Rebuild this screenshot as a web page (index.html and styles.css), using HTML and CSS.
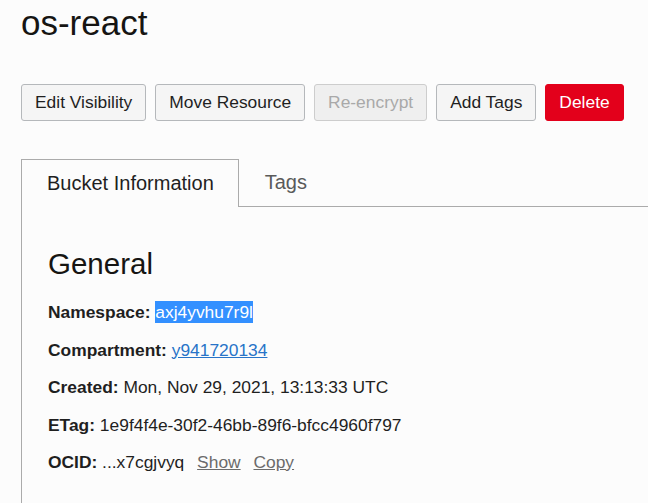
FILE: index.html
```html
<!DOCTYPE html>
<html lang="en">
<head>
<meta charset="utf-8">
<title>os-react</title>
<link rel="stylesheet" href="styles.css">
</head>
<body>
<div class="page">
  <h1 class="title">os-react</h1>
  <div class="actions">
    <button class="btn">Edit Visibility</button>
    <button class="btn">Move Resource</button>
    <button class="btn btn-disabled" disabled>Re-encrypt</button>
    <button class="btn">Add Tags</button>
    <button class="btn btn-danger">Delete</button>
  </div>
  <div class="tabs">
    <div class="tab tab-active">Bucket Information</div>
    <div class="tab">Tags</div>
    <div class="tab-fill"></div>
  </div>
  <div class="panel">
    <h2 class="section-title">General</h2>
    <div class="row"><span class="label">Namespace:</span> <span class="selected">axj4yvhu7r9l</span></div>
    <div class="row"><span class="label">Compartment:</span> <a class="link" href="#">y941720134</a></div>
    <div class="row"><span class="label">Created:</span> Mon, Nov 29, 2021, 13:13:33 UTC</div>
    <div class="row"><span class="label">ETag:</span> 1e9f4f4e-30f2-46bb-89f6-bfcc4960f797</div>
    <div class="row"><span class="label">OCID:</span> ...x7cgjvyq <a class="sublink" href="#">Show</a> <a class="sublink" href="#">Copy</a></div>
  </div>
</div>
</body>
</html>
```
FILE: styles.css
```css
html, body {
  margin: 0;
  padding: 0;
  background: #fcfcfc;
}
body {
  font-family: "Liberation Sans", Arial, sans-serif;
  color: #1f1f1f;
  overflow: hidden;
}
.page {
  padding-left: 21px;
  padding-top: 3px;
}
.title {
  margin: 0;
  font-size: 35px;
  font-weight: normal;
  line-height: 40px;
  color: #161513;
}
.actions {
  display: flex;
  gap: 9px;
  margin-top: 41px;
}
.btn {
  font-family: "Liberation Sans", Arial, sans-serif;
  font-size: 17.4px;
  height: 37px;
  padding: 0 13px;
  border: 1px solid #b5b8bb;
  border-radius: 3px;
  background: #f5f5f5;
  color: #1f1f1f;
  line-height: 35px;
}
.btn-disabled {
  background: #efefef;
  color: #a9a9a9;
  border-color: #cdcdcd;
}
.btn-danger {
  background: #e3001b;
  border-color: #e3001b;
  color: #ffffff;
}
.tabs {
  display: flex;
  margin-top: 38px;
  height: 48px;
}
.tab {
  font-size: 20px;
  line-height: 47px;
  padding: 0 26px;
  color: #5a5a5a;
  border-bottom: 1px solid #ababab;
}
.tab-active {
  color: #1f1f1f;
  border: 1px solid #ababab;
  border-bottom: none;
  padding: 0 24px 0 25px;
}
.tab-fill {
  flex: 1;
  border-bottom: 1px solid #ababab;
}
.panel {
  border-left: 1px solid #ababab;
  padding: 40px 0 40px 26px;
  font-size: 17.4px;
}
.section-title {
  margin: 0 0 13px;
  font-size: 29.5px;
  font-weight: normal;
  line-height: 34px;
  color: #161513;
}
.row {
  line-height: 37.5px;
  white-space: nowrap;
}
.label {
  font-weight: bold;
}
.selected {
  background: #3390ff;
  color: #ffffff;
  padding: 1px 0;
}
.link {
  color: #2874c8;
  text-decoration: underline;
}
.sublink {
  color: #6b6b6b;
  text-decoration: underline;
  margin-left: 8px;
}
```
